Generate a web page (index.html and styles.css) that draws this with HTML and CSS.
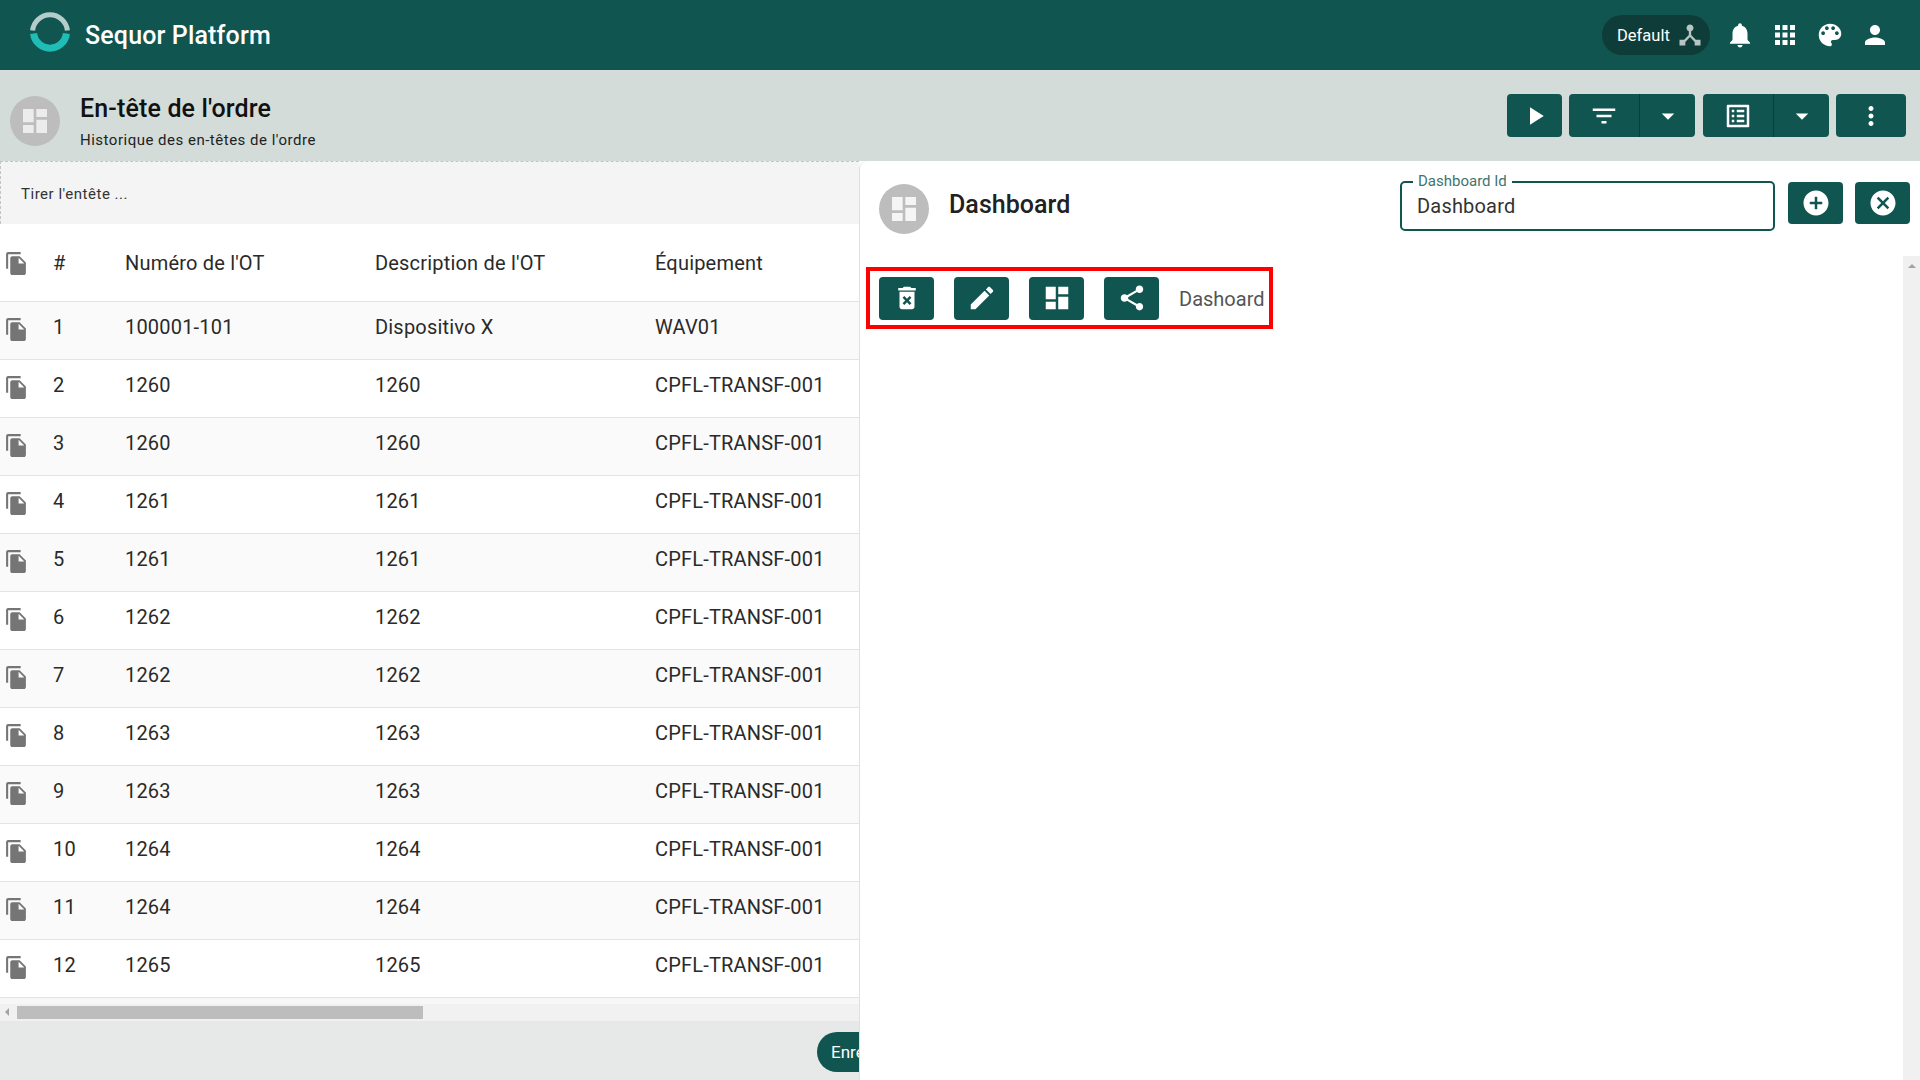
FILE: index.html
```html
<!DOCTYPE html>
<html lang="en">
<head>
    <meta charset="UTF-8">
    <meta name="viewport" content="width=device-width, initial-scale=1.0">
    <title>Sequor Platform</title>
    <link rel="stylesheet" href="styles.css">
</head>
<body>
    <svg class="defs" width="0" height="0">
        <symbol id="i-play" viewBox="0 0 24 24"><path d="M8 5v14l11-7z"/></symbol>
        <symbol id="i-filter" viewBox="0 0 24 24"><path d="M10 18h4v-2h-4v2zM3 6v2h18V6H3zm3 7h12v-2H6v2z"/></symbol>
        <symbol id="i-drop" viewBox="0 0 24 24"><path d="M7 10l5 5 5-5z"/></symbol>
        <symbol id="i-list" viewBox="0 0 24 24"><path d="M19 5v14H5V5h14m1.1-2H3.9c-.5 0-.9.4-.9.9v16.2c0 .4.4.9.9.9h16.2c.4 0 .9-.5.9-.9V3.9c0-.5-.5-.9-.9-.9zM11 7h6v2h-6V7zm0 4h6v2h-6v-2zm0 4h6v2h-6zM7 7h2v2H7zm0 4h2v2H7zm0 4h2v2H7z"/></symbol>
        <symbol id="i-more" viewBox="0 0 24 24"><path d="M12 8c1.1 0 2-.9 2-2s-.9-2-2-2-2 .9-2 2 .9 2 2 2zm0 2c-1.1 0-2 .9-2 2s.9 2 2 2 2-.9 2-2-.9-2-2-2zm0 6c-1.1 0-2 .9-2 2s.9 2 2 2 2-.9 2-2-.9-2-2-2z"/></symbol>
        <symbol id="i-bell" viewBox="0 0 24 24"><path d="M12 22c1.1 0 2-.9 2-2h-4c0 1.1.89 2 2 2zm6-6v-5c0-3.07-1.64-5.64-4.5-6.32V4c0-.83-.67-1.5-1.5-1.5s-1.5.67-1.5 1.5v.68C7.63 5.36 6 7.92 6 11v5l-2 2v1h16v-1l-2-2z"/></symbol>
        <symbol id="i-apps" viewBox="0 0 24 24"><path d="M4 8h4V4H4v4zm6 12h4v-4h-4v4zm-6 0h4v-4H4v4zm0-6h4v-4H4v4zm6 0h4v-4h-4v4zm6-10v4h4V4h-4zm-6 4h4V4h-4v4zm6 6h4v-4h-4v4zm0 6h4v-4h-4v4z"/></symbol>
        <symbol id="i-palette" viewBox="0 0 24 24"><path d="M12 3c-4.97 0-9 4.03-9 9s4.03 9 9 9c.83 0 1.5-.67 1.5-1.5 0-.39-.15-.74-.39-1.01-.23-.26-.38-.61-.38-.99 0-.83.67-1.5 1.5-1.5H16c2.76 0 5-2.24 5-5 0-4.42-4.03-8-9-8zm-5.5 9c-.83 0-1.5-.67-1.5-1.5S5.67 9 6.5 9 8 9.67 8 10.5 7.33 12 6.5 12zm3-4C8.67 8 8 7.33 8 6.5S8.67 5 9.5 5s1.5.67 1.5 1.5S10.33 8 9.5 8zm5 0c-.83 0-1.5-.67-1.5-1.5S13.67 5 14.5 5s1.5.67 1.5 1.5S15.33 8 14.5 8zm3 4c-.83 0-1.5-.67-1.5-1.5S16.67 9 17.5 9s1.5.67 1.5 1.5-.67 1.5-1.5 1.5z"/></symbol>
        <symbol id="i-person" viewBox="0 0 24 24"><path d="M12 12c2.21 0 4-1.79 4-4s-1.79-4-4-4-4 1.79-4 4 1.79 4 4 4zm0 2c-2.67 0-8 1.34-8 4v2h16v-2c0-2.66-5.33-4-8-4z"/></symbol>
        <symbol id="i-hub" viewBox="0 0 24 24"><path d="M17 16l-4-4V8.82C14.16 8.4 15 7.3 15 6c0-1.66-1.34-3-3-3S9 4.34 9 6c0 1.3.84 2.4 2 2.82V12l-4 4H3v5h5v-3.05l4-4.2 4 4.2V21h5v-5h-4z"/></symbol>
        <symbol id="i-dash" viewBox="0 0 24 24"><path d="M3 13h8V3H3v10zm0 8h8v-6H3v6zm10 0h8V11h-8v10zm0-18v6h8V3h-8z"/></symbol>
        <symbol id="i-share" viewBox="0 0 24 24"><path d="M18 16.08c-.76 0-1.44.3-1.96.77L8.91 12.7c.05-.23.09-.46.09-.7s-.04-.47-.09-.7l7.05-4.11c.54.5 1.25.81 2.04.81 1.66 0 3-1.34 3-3s-1.34-3-3-3-3 1.34-3 3c0 .24.04.47.09.7L8.04 9.81C7.5 9.31 6.79 9 6 9c-1.66 0-3 1.34-3 3s1.34 3 3 3c.79 0 1.5-.31 2.04-.81l7.12 4.16c-.05.21-.08.43-.08.65 0 1.61 1.31 2.92 2.92 2.92 1.61 0 2.92-1.31 2.92-2.92s-1.31-2.92-2.92-2.92z"/></symbol>
        <symbol id="i-edit" viewBox="0 0 24 24"><path d="M3 17.25V21h3.75L17.81 9.94l-3.75-3.75L3 17.25zM20.71 7.04c.39-.39.39-1.02 0-1.41l-2.34-2.34c-.39-.39-1.02-.39-1.41 0l-1.83 1.83 3.75 3.75 1.83-1.83z"/></symbol>
        <symbol id="i-delete" viewBox="0 0 24 24"><path d="M6 19c0 1.1.9 2 2 2h8c1.1 0 2-.9 2-2V7H6v12zm2.46-7.12l1.41-1.41L12 12.59l2.12-2.12 1.41 1.41L13.41 14l2.12 2.12-1.41 1.41L12 15.41l-2.12 2.12-1.41-1.41L10.59 14l-2.13-2.12zM15.5 4l-1-1h-5l-1 1H5v2h14V4z"/></symbol>
        <symbol id="i-add" viewBox="0 0 24 24"><path d="M12 2C6.48 2 2 6.48 2 12s4.48 10 10 10 10-4.48 10-10S17.52 2 12 2zm5 11h-4v4h-2v-4H7v-2h4V7h2v4h4v2z"/></symbol>
        <symbol id="i-cancel" viewBox="0 0 24 24"><path d="M12 2C6.47 2 2 6.47 2 12s4.47 10 10 10 10-4.47 10-10S17.53 2 12 2zm5 13.59L15.59 17 12 13.41 8.41 17 7 15.59 10.59 12 7 8.41 8.41 7 12 10.59 15.59 7 17 8.41 13.41 12 17 15.59z"/></symbol>
        <symbol id="i-copy" viewBox="0 0 24 24"><path d="M16 1H4c-1.1 0-2 .9-2 2v14h2V3h12V1zm-1 4l6 6v10c0 1.1-.9 2-2 2H7.99C6.89 23 6 22.1 6 21l.01-14c0-1.1.89-2 1.99-2h7zm-1 7h5.5L14 6.5V12z"/></symbol>
    </svg>

    <header class="topbar">
        <svg class="logo" viewBox="0 0 40 40" width="40" height="40">
            <path d="M2.6 18.5A17.5 17.5 0 0 1 37.4 18.5" fill="none" stroke="#b4cdca" stroke-width="5"/>
            <path d="M3.6 21.5A16.5 16.5 0 0 0 36.4 21.5" fill="none" stroke="#20bdb7" stroke-width="7"/>
        </svg>
        <span class="brand">Sequor Platform</span>
        <div class="topbar-right">
            <div class="pill">
                <span>Default</span>
                <svg class="ic-hub"><use href="#i-hub"/></svg>
            </div>
            <svg class="ic-top"><use href="#i-bell"/></svg>
            <svg class="ic-top"><use href="#i-apps"/></svg>
            <svg class="ic-top"><use href="#i-palette"/></svg>
            <svg class="ic-top"><use href="#i-person"/></svg>
        </div>
    </header>

    <section class="titlebar">
        <div class="avatar"><svg><use href="#i-dash"/></svg></div>
        <div class="titles">
            <h1>En-tête de l'ordre</h1>
            <p>Historique des en-têtes de l'ordre</p>
        </div>
        <div class="actions">
            <button class="btn btn-play"><svg><use href="#i-play"/></svg></button>
            <div class="split">
                <button class="btn btn-main"><svg><use href="#i-filter"/></svg></button>
                <button class="btn btn-drop"><svg><use href="#i-drop"/></svg></button>
            </div>
            <div class="split">
                <button class="btn btn-main"><svg><use href="#i-list"/></svg></button>
                <button class="btn btn-drop"><svg><use href="#i-drop"/></svg></button>
            </div>
            <button class="btn btn-more"><svg><use href="#i-more"/></svg></button>
        </div>
    </section>

    <main class="content">
        <section class="left">
            <div class="group-zone">Tirer l'entête ...</div>
            <div class="table-wrap">
                <table class="grid">
                    <thead>
                        <tr><th class="c-icon"><svg><use href="#i-copy"/></svg></th><th class="c-num">#</th><th class="c-ot">Numéro de l'OT</th><th class="c-desc">Description de l'OT</th><th class="c-eq">Équipement</th></tr>
                    </thead>
                    <tbody>
                        <tr><td class="c-icon"><svg><use href="#i-copy"/></svg></td><td>1</td><td>100001-101</td><td>Dispositivo X</td><td>WAV01</td></tr>
                        <tr><td class="c-icon"><svg><use href="#i-copy"/></svg></td><td>2</td><td>1260</td><td>1260</td><td>CPFL-TRANSF-001</td></tr>
                        <tr><td class="c-icon"><svg><use href="#i-copy"/></svg></td><td>3</td><td>1260</td><td>1260</td><td>CPFL-TRANSF-001</td></tr>
                        <tr><td class="c-icon"><svg><use href="#i-copy"/></svg></td><td>4</td><td>1261</td><td>1261</td><td>CPFL-TRANSF-001</td></tr>
                        <tr><td class="c-icon"><svg><use href="#i-copy"/></svg></td><td>5</td><td>1261</td><td>1261</td><td>CPFL-TRANSF-001</td></tr>
                        <tr><td class="c-icon"><svg><use href="#i-copy"/></svg></td><td>6</td><td>1262</td><td>1262</td><td>CPFL-TRANSF-001</td></tr>
                        <tr><td class="c-icon"><svg><use href="#i-copy"/></svg></td><td>7</td><td>1262</td><td>1262</td><td>CPFL-TRANSF-001</td></tr>
                        <tr><td class="c-icon"><svg><use href="#i-copy"/></svg></td><td>8</td><td>1263</td><td>1263</td><td>CPFL-TRANSF-001</td></tr>
                        <tr><td class="c-icon"><svg><use href="#i-copy"/></svg></td><td>9</td><td>1263</td><td>1263</td><td>CPFL-TRANSF-001</td></tr>
                        <tr><td class="c-icon"><svg><use href="#i-copy"/></svg></td><td>10</td><td>1264</td><td>1264</td><td>CPFL-TRANSF-001</td></tr>
                        <tr><td class="c-icon"><svg><use href="#i-copy"/></svg></td><td>11</td><td>1264</td><td>1264</td><td>CPFL-TRANSF-001</td></tr>
                        <tr><td class="c-icon"><svg><use href="#i-copy"/></svg></td><td>12</td><td>1265</td><td>1265</td><td>CPFL-TRANSF-001</td></tr>
                    </tbody>
                </table>
            </div>
            <div class="hscroll">
                <span class="hscroll-arrow"></span>
                <span class="hscroll-thumb"></span>
            </div>
            <div class="left-foot"><button class="save">Enregistrer</button></div>
        </section>

        <section class="right">
            <div class="right-head">
                <div class="avatar avatar-light"><svg><use href="#i-dash"/></svg></div>
                <h2>Dashboard</h2>
                <fieldset class="field">
                    <legend>Dashboard Id</legend>
                    <span>Dashboard</span>
                </fieldset>
                <button class="btn btn-square"><svg><use href="#i-add"/></svg></button>
                <button class="btn btn-square"><svg><use href="#i-cancel"/></svg></button>
            </div>
            <div class="right-body">
                <div class="marked">
                    <button class="btn btn-tool"><svg><use href="#i-delete"/></svg></button>
                    <button class="btn btn-tool"><svg><use href="#i-edit"/></svg></button>
                    <button class="btn btn-tool"><svg><use href="#i-dash"/></svg></button>
                    <button class="btn btn-tool"><svg><use href="#i-share"/></svg></button>
                    <span class="marked-label">Dashoard</span>
                </div>
                <div class="vscroll"><span class="vscroll-arrow"></span></div>
            </div>
        </section>
    </main>
</body>
</html>
```

FILE: styles.css
```css
* { box-sizing: border-box; }
html, body { height: 100%; }
body {
    margin: 0;
    height: 1080px;
    overflow: hidden;
    display: flex;
    flex-direction: column;
    font-family: Roboto, sans-serif;
    color: #212121;
    background: #fff;
}
.defs { position: absolute; }
svg { fill: currentColor; display: block; }
button { font-family: inherit; cursor: pointer; }

/* top bar */
.topbar {
    height: 70px;
    flex: none;
    display: flex;
    align-items: center;
    padding: 0 30px;
    background: #115550;
    color: #fff;
}
.logo { flex: none; margin-top: -6px; }
.brand { margin-left: 15px; font-size: 25px; letter-spacing: .15px; font-weight: 500; }
.topbar-right { margin-left: auto; display: flex; align-items: center; gap: 15px; }
.pill {
    width: 108px;
    height: 40px;
    padding-left: 15px;
    border-radius: 20px;
    background: #0d3c39;
    display: flex;
    align-items: center;
    font-size: 16.5px;
}
.ic-hub { width: 28px; height: 28px; margin-left: 6px; color: #b7c6c4; }
.ic-top { width: 30px; height: 30px; }

/* page title */
.titlebar {
    height: 91px;
    flex: none;
    display: flex;
    align-items: flex-start;
    background: #d3dcd9;
    padding: 26px 14px 0 10px;
}
.avatar {
    width: 50px;
    height: 50px;
    flex: none;
    border-radius: 50%;
    background: #bdbdbd;
    color: #ececec;
    display: flex;
    align-items: center;
    justify-content: center;
}
.avatar svg { width: 32px; height: 32px; }
.titles { margin-left: 20px; margin-top: -3px; }
.titles h1 { margin: 0; font-size: 25px; letter-spacing: .15px; font-weight: 500; line-height: 32px; color: #111; }
.titles p { margin: 6px 0 0; font-size: 15px; line-height: 18px; letter-spacing: .5px; color: #222; }
.actions { margin-left: auto; margin-top: -2px; display: flex; gap: 7px; }

.btn {
    border: none;
    background: #115550;
    color: #fff;
    padding: 0;
    height: 43px;
    border-radius: 4px;
    display: flex;
    align-items: center;
    justify-content: center;
}
.btn svg { width: 30px; height: 30px; }
.btn-play { width: 55px; }
.btn-more { width: 70px; }
.split { display: flex; }
.split + .split { margin-left: 1px; }
.btn-main { width: 71px; border-radius: 4px 0 0 4px; border-right: 1px solid #0d3c39; }
.btn-drop { width: 55px; border-radius: 0 4px 4px 0; }

/* left panel */
.content { flex: 1; min-height: 0; display: flex; }
.left {
    width: 859px;
    flex: none;
    overflow: hidden;
    display: flex;
    flex-direction: column;
    background: #e7e9e8;
}
.group-zone {
    height: 63px;
    flex: none;
    padding: 21px 0 0 20px;
    font-size: 15px;
    letter-spacing: .52px;
    line-height: 22px;
    color: #333;
    background: #f4f4f4;
    border-top: 1px dashed #c4c4c4;
    border-left: 1px dashed #c4c4c4;
}
.table-wrap { flex: none; overflow: hidden; }
.grid {
    width: 1300px;
    table-layout: fixed;
    border-collapse: collapse;
    font-size: 20px;
    letter-spacing: .19px;
    color: #2a2a2a;
}
.grid th, .grid td {
    padding: 0;
    text-align: left;
    font-weight: 400;
    white-space: nowrap;
    border-bottom: 1px solid #e3e3e3;
}
.grid th { padding-top: 2px; }
.grid tbody td { padding-bottom: 7px; }
.grid tbody td.c-icon { padding-bottom: 1px; }
.grid thead tr { height: 77px; background: #fff; }
.grid tbody tr { height: 58px; background: #fff; }
.grid tbody tr:nth-child(odd) { background: #fafafa; }
.c-icon { width: 53px; color: #757575; }
.c-icon svg { width: 25px; height: 25px; margin-left: 4px; }
.c-num { width: 72px; }
.c-ot { width: 250px; }
.c-desc { width: 280px; }
.c-eq { width: 645px; }

.hscroll {
    height: 23px;
    flex: none;
    display: flex;
    align-items: center;
    background: #f1f1f1;
    border-top: 6px solid #f7f7f7;
}
.hscroll-arrow {
    margin-left: 5px;
    width: 0;
    height: 0;
    border: 4px solid transparent;
    border-left: 0;
    border-right-color: #a3a3a3;
}
.hscroll-thumb { width: 406px; height: 13px; margin-left: 8px; background: #bdbdbd; }

.left-foot { flex: 1; position: relative; }
.save {
    position: absolute;
    left: 817px;
    top: 11px;
    height: 40px;
    width: 120px;
    padding: 0 14px;
    border: none;
    border-radius: 20px;
    text-align: left;
    font-size: 17px;
    background: #115550;
    color: #fff;
}

/* right panel */
.right {
    flex: 1;
    min-width: 0;
    display: flex;
    flex-direction: column;
    background: #fff;
    border-left: 1px solid #e0e0e0;
    border-top-left-radius: 8px;
    position: relative;
    z-index: 1;
}
.right-head { height: 95px; flex: none; display: flex; align-items: flex-start; padding: 21px 10px 0 19px; }
.avatar-light { margin-top: 2px; color: #f5f5f5; }
.right-head h2 { margin: 3px auto 0 20px; font-size: 25px; letter-spacing: .05px; font-weight: 500; line-height: 40px; color: #212121; }
.field {
    width: 375px;
    height: 50px;
    margin: -1px 13px 0 0;
    padding: 0 0 0 15px;
    border: 2px solid #115550;
    border-radius: 5px;
    font-size: 20px;
    letter-spacing: .19px;
    line-height: 34px;
    color: #333;
}
.field legend {
    padding: 0 5px;
    margin-left: -4px;
    height: 2px;
    font-size: 15px;
    letter-spacing: 0;
    line-height: 0;
    color: #3f7470;
}
.field span { display: block; margin-top: 6px; }
.btn-square { width: 55px; height: 42px; }
.btn-square + .btn-square { margin-left: 12px; }

.right-body { flex: 1; position: relative; padding: 11px 0 0 6px; }
.marked {
    width: 407px;
    height: 62px;
    display: flex;
    align-items: center;
    gap: 20px;
    padding-left: 9px;
    border: 4px solid #ff0000;
}
.btn-tool { width: 55px; }
.marked-label { font-size: 20px; padding-top: 2px; color: #555; }
.vscroll { position: absolute; top: 0; right: 0; width: 17px; bottom: 0; background: #f0f0f0; }
.vscroll-arrow {
    display: block;
    margin: 8px auto 0;
    width: 0;
    height: 0;
    border: 4px solid transparent;
    border-top: 0;
    border-bottom-color: #a3a3a3;
}
```
